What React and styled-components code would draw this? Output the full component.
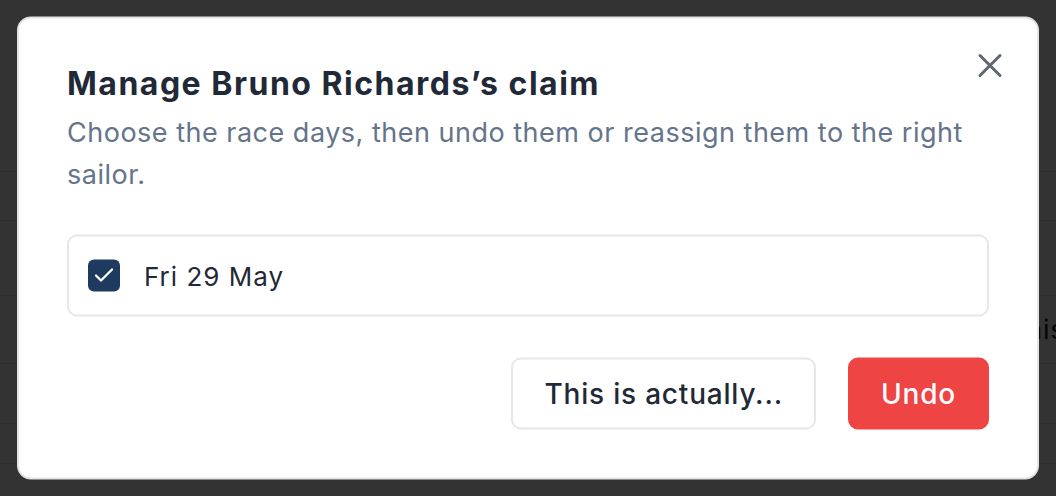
import React from "react";
import styled, { createGlobalStyle } from "styled-components";
import { X, Check } from "lucide-react";

const GlobalStyle = createGlobalStyle`
  * { box-sizing: border-box; }
  html, body {
    margin: 0;
    padding: 0;
    background: #ffffff;
    font-family: Inter, "Noto Sans", sans-serif;
    overflow: hidden;
  }
`;

const rows = [172, 49, 75, 68, 60, 40, 40];

const Page = () => {
  return (
    <>
      <GlobalStyle />
      <Table>
        {rows.map((h, i) => (
          <Row key={i} h={h}>
            {i === 3 && <Cell>This</Cell>}
          </Row>
        ))}
      </Table>
      <Backdrop />
      <Dialog role="dialog">
        <CloseButton aria-label="Close">
          <X size={40} strokeWidth={1.8} />
        </CloseButton>
        <Header>
          <Title>Manage Bruno Richards’s claim</Title>
          <Description>
            Choose the race days, then undo them or reassign them to the right
            sailor.
          </Description>
        </Header>
        <DayList>
          <DayItem>
            <Box>
              <Check size={24} strokeWidth={2.3} color="#ffffff" />
            </Box>
            <DayLabel>Fri 29 May</DayLabel>
          </DayItem>
        </DayList>
        <Footer>
          <Button>This is actually...</Button>
          <Button danger>Undo</Button>
        </Footer>
      </Dialog>
    </>
  );
};

const Table = styled.div`
  display: flex;
  flex-direction: column;
  height: 496px;
`;

const Row = styled.div`
  flex: 0 0 ${(p) => p.h}px;
  border-bottom: 1px solid #e5e7eb;
  display: flex;
  align-items: center;
`;

const Cell = styled.span`
  padding-left: 1008px;
  font-size: 27px;
  letter-spacing: 0.75px;
  color: #111827;
  white-space: nowrap;
`;

const Backdrop = styled.div`
  position: fixed;
  inset: 0;
  background: rgba(0, 0, 0, 0.8);
`;

const Dialog = styled.div`
  position: fixed;
  left: 50%;
  top: 50%;
  transform: translate(-50%, -50%);
  width: 1022px;
  background: #ffffff;
  border: 2px solid #e4e4e7;
  border-radius: 14px;
  padding: 48px;
  display: flex;
  flex-direction: column;
`;

const CloseButton = styled.button`
  position: absolute;
  top: 27px;
  right: 27px;
  background: none;
  border: none;
  padding: 0;
  display: flex;
  color: #5f6670;
  cursor: pointer;
`;

const Header = styled.div`
  display: flex;
  flex-direction: column;
  gap: 11px;
`;

const Title = styled.h2`
  margin: 0;
  font-size: 32px;
  line-height: 34px;
  font-weight: 700;
  color: #1f2937;
  letter-spacing: 1.5px;
`;

const Description = styled.p`
  margin: 0;
  font-size: 27px;
  line-height: 42px;
  letter-spacing: 0.5px;
  color: #64748b;
`;

const DayList = styled.div`
  margin-top: 39px;
  border: 2px solid #e5e7eb;
  border-radius: 10px;
`;

const DayItem = styled.label`
  display: flex;
  align-items: center;
  gap: 24px;
  height: 78px;
  padding: 0 19px;
`;

const Box = styled.span`
  width: 32px;
  height: 32px;
  border-radius: 6px;
  background: #1e3a5f;
  display: flex;
  align-items: center;
  justify-content: center;
`;

const DayLabel = styled.span`
  font-size: 26px;
  letter-spacing: 1px;
  color: #1f2937;
`;

const Footer = styled.div`
  margin-top: 41px;
  display: flex;
  justify-content: flex-end;
  gap: 32px;
`;

const Button = styled.button`
  height: 72px;
  padding: 0 31px;
  border-radius: 10px;
  font-family: Inter, "Noto Sans", sans-serif;
  font-size: 28px;
  font-weight: 500;
  letter-spacing: 0.8px;
  cursor: pointer;
  border: 2px solid ${(p) => (p.danger ? "#ef4444" : "#e5e7eb")};
  background: ${(p) => (p.danger ? "#ef4444" : "#ffffff")};
  color: ${(p) => (p.danger ? "#ffffff" : "#1f2937")};
`;

export default Page;
